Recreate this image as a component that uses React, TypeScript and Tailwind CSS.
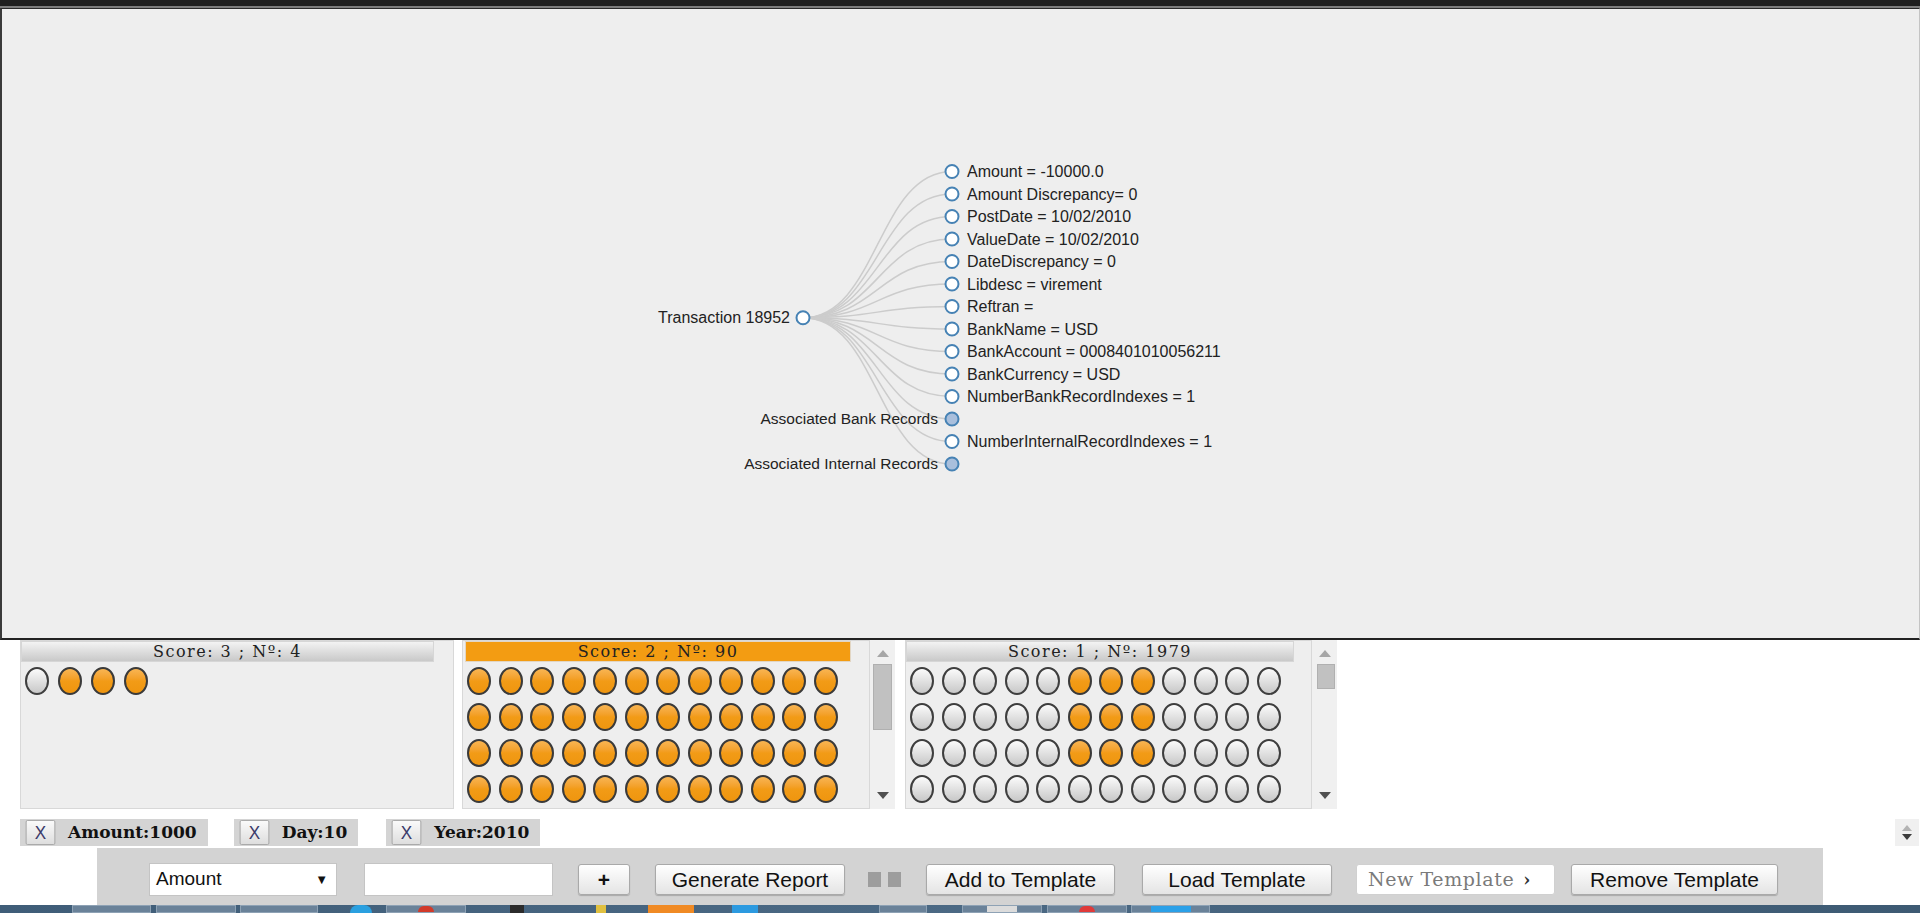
import React from "react";

type Leaf = { t: string; c?: boolean };

const CHILDREN: Leaf[] = [
  { t: "Amount = -10000.0" },
  { t: "Amount Discrepancy= 0" },
  { t: "PostDate = 10/02/2010" },
  { t: "ValueDate = 10/02/2010" },
  { t: "DateDiscrepancy = 0" },
  { t: "Libdesc = virement" },
  { t: "Reftran =" },
  { t: "BankName = USD" },
  { t: "BankAccount = 0008401010056211" },
  { t: "BankCurrency = USD" },
  { t: "NumberBankRecordIndexes = 1" },
  { t: "Associated Bank Records", c: true },
  { t: "NumberInternalRecordIndexes = 1" },
  { t: "Associated Internal Records", c: true },
];

const RX = 801;
const CX = 950;
const Y0 = 162.5;
const DY = 22.5;
const RY = Y0 + (DY * (CHILDREN.length - 1)) / 2;

const TreeCanvas = () => {
  const mx = (RX + CX) / 2;
  return (
    <svg width="1917" height="629" className="block">
      <g fill="none" stroke="#cccccc" strokeWidth="1.5">
        {CHILDREN.map((_, i) => {
          const y = Y0 + DY * i;
          return <path key={i} d={`M${RX},${RY}C${mx},${RY} ${mx},${y} ${CX},${y}`} />;
        })}
      </g>
      <g fontFamily="'Liberation Sans', Arial, sans-serif" fontSize="16" fill="#222">
        <circle cx={RX} cy={RY} r="6.5" fill="#fff" stroke="#4682b4" strokeWidth="2" />
        <text x={RX - 13} y={RY} dy="0.35em" textAnchor="end">
          Transaction 18952
        </text>
        {CHILDREN.map((n, i) => {
          const y = Y0 + DY * i;
          return (
            <g key={i}>
              <circle cx={CX} cy={y} r="6.5" fill={n.c ? "#a9bfdc" : "#fff"} stroke="#4682b4" strokeWidth="2" />
              <text
                x={n.c ? CX - 14 : CX + 15}
                y={y}
                dy="0.35em"
                textAnchor={n.c ? "end" : "start"}
                fontSize={n.c ? "15.5" : "16"}
              >
                {n.t}
              </text>
            </g>
          );
        })}
      </g>
    </svg>
  );
};

const Dot = ({ on }: { on: boolean }) =>
  on ? (
    <div className="w-[24px] h-[28px] shrink-0 rounded-[50%] border-2 border-[#3a3a3a] bg-linear-to-b from-[#f8b552] via-[#f29b16] to-[#ef950f]" />
  ) : (
    <div className="w-[24px] h-[28px] shrink-0 rounded-[50%] border-2 border-[#3e3e3e] bg-linear-to-b from-[#fbfbfb] to-[#c8c8c8]" />
  );

const Header = ({ text, orange, w }: { text: string; orange?: boolean; w: string }) => (
  <div
    className={
      (orange
        ? "bg-[#f39c12] border-[#e2d6c4] "
        : "bg-linear-to-b from-[#f3f3f3] to-[#c9c9c9] border-[#d6d6d6] ") +
      w +
      " h-[21px] border flex items-center justify-center font-['DejaVu_Serif',serif] text-[16px] tracking-[1.5px] text-[#222] leading-none"
    }
  >
    {text}
  </div>
);

const Scrollbar = ({ small }: { small?: boolean }) => (
  <div className="w-[25px] h-full bg-[#f0f0f0] flex flex-col items-center">
    <svg width="12" height="7" className="mt-[10px]">
      <path d="M0,7 L6,0 L12,7 Z" fill="#a6a6a6" />
    </svg>
    <div
      className={
        small
          ? "mt-[7px] w-[18px] h-[25px] bg-[#c1c1c1] border border-[#b0b0b0] ml-[2px]"
          : "mt-[7px] w-[19px] h-[66px] bg-[#c1c1c1] border border-[#b0b0b0]"
      }
    />
    <div className="flex-1" />
    <svg width="12" height="7" className="mb-[10px]">
      <path d="M0,0 L12,0 L6,7 Z" fill="#505050" />
    </svg>
  </div>
);

const panel2 = Array.from({ length: 90 }, () => true);
const panel3 = Array.from({ length: 72 }, (_, i) => {
  const row = Math.floor(i / 12);
  const col = i % 12;
  return row < 3 && col >= 5 && col <= 7;
});

const Chip = ({ label }: { label: string }) => (
  <div className="h-[27px] bg-[#d4d4d4] flex items-center pl-[4px] pr-[11px]">
    <div className="w-[33px] h-[25px] rounded-[2px] border border-[#a8a8a8] bg-linear-to-b from-[#fafafa] to-[#dedede] flex items-center justify-center font-['Liberation_Sans',sans-serif] text-[19px] font-light text-[#3a3a6a] leading-none scale-x-90">
      X
    </div>
    <span className="ml-[11px] font-['DejaVu_Serif',serif] font-bold text-[17px] text-[#111] leading-none">{label}</span>
  </div>
);

const Btn = ({ children, w, cls = "" }: { children: React.ReactNode; w: string; cls?: string }) => (
  <div
    className={
      w +
      " " +
      cls +
      " h-[31px] rounded-[3px] border border-[#a9a9a9] bg-linear-to-b from-white to-[#e4e4e4] shadow-[0_1px_1px_rgba(0,0,0,0.2)] flex items-center justify-center text-[21px] text-[#111] leading-none shrink-0"
    }
  >
    {children}
  </div>
);

const TASK = ["ml-[72px] w-[79px]", "ml-[5px] w-[80px]", "ml-[4px] w-[78px]"];

export default function App() {
  return (
    <div className="w-full h-[913px] overflow-hidden bg-white flex flex-col font-['Liberation_Sans',Arial,sans-serif]">
      <div className="h-[6px] bg-[#1f1f1f] shrink-0" />
      <div className="h-[2px] bg-[#7c7c7c] shrink-0" />
      <div className="h-[632px] shrink-0 bg-[#eeeeee] border-t border-l-2 border-r border-b-2 border-t-[#2a2a2a] border-l-[#3a3a3a] border-r-[#c4c4c4] border-b-[#222222] overflow-hidden">
        <TreeCanvas />
      </div>

      <div className="h-[169px] shrink-0 flex items-start pl-[20px]">
        <div className="w-[434px] h-[169px] border border-[#d8d8d8] bg-[#eeeeee]">
          <Header text="Score: 3 ; Nº: 4" w="w-[413px]" />
          <div className="flex gap-[9px] pl-[4px] pt-[5px]">
            <Dot on={false} />
            <Dot on />
            <Dot on />
            <Dot on />
          </div>
        </div>

        <div className="ml-[8px] w-[433px] h-[169px] flex">
          <div className="w-[408px] h-full border border-[#d8d8d8] bg-[#eeeeee] overflow-hidden">
            <div className="ml-[2px]">
              <Header text="Score: 2 ; Nº: 90" orange w="w-[386px]" />
            </div>
            <div className="grid grid-cols-[repeat(12,24px)] gap-x-[7.5px] gap-y-[8px] pl-[4px] pt-[5px]">
              {panel2.map((on, i) => (
                <Dot key={i} on={on} />
              ))}
            </div>
          </div>
          <Scrollbar />
        </div>

        <div className="ml-[10px] w-[433px] h-[169px] flex">
          <div className="w-[407px] h-full border border-[#d8d8d8] bg-[#eeeeee] overflow-hidden">
            <Header text="Score: 1 ; Nº: 1979" w="w-[388px]" />
            <div className="grid grid-cols-[repeat(12,24px)] gap-x-[7.5px] gap-y-[8px] pl-[4px] pt-[5px]">
              {panel3.map((on, i) => (
                <Dot key={i} on={on} />
              ))}
            </div>
          </div>
          <Scrollbar small />
        </div>
      </div>

      <div className="mt-[10px] h-[27px] shrink-0 flex items-center justify-between pl-[20px] pr-[1px]">
        <div className="flex items-center">
          <Chip label="Amount:1000" />
          <div className="ml-[26px]">
            <Chip label="Day:10" />
          </div>
          <div className="ml-[28px]">
            <Chip label="Year:2010" />
          </div>
        </div>
        <div className="w-[24px] h-[27px] bg-[#f0f0f0] flex flex-col items-center justify-center gap-[3px]">
          <svg width="10" height="6">
            <path d="M0,6 L5,0 L10,6 Z" fill="#b3b3b3" />
          </svg>
          <svg width="10" height="6">
            <path d="M0,0 L10,0 L5,6 Z" fill="#3c3c3c" />
          </svg>
        </div>
      </div>

      <div className="mt-[2px] ml-[97px] w-[1726px] h-[57px] shrink-0 bg-[#d3d3d3] flex items-start pt-[15px] pl-[52px]">
        <div className="flex items-center h-[33px]">
          <div className="w-[188px] h-[33px] bg-white border border-[#c4c4c4] flex items-center justify-between pl-[6px] pr-[8px] text-[19px] text-[#111] shrink-0">
            <span>Amount</span>
            <span className="text-[13px] text-[#111]">▼</span>
          </div>
          <div className="ml-[27px] w-[189px] h-[33px] bg-white border border-[#c4c4c4] shrink-0" />
          <Btn w="w-[52px]" cls="ml-[25px] font-bold text-[16px]">
            +
          </Btn>
          <Btn w="w-[190px]" cls="ml-[25px]">
            Generate Report
          </Btn>
          <div className="ml-[23px] w-[34px] flex gap-[7px] shrink-0">
            <div className="w-[13px] h-[15px] bg-[#9d9d9d]" />
            <div className="w-[13px] h-[15px] bg-[#9d9d9d]" />
          </div>
          <Btn w="w-[189px]" cls="ml-[24px]">
            Add to Template
          </Btn>
          <Btn w="w-[190px]" cls="ml-[27px]">
            Load Template
          </Btn>
          <div className="ml-[24px] w-[199px] h-[31px] bg-white border border-[#d0d0d0] rounded-[3px] flex items-center pl-[11px] font-['DejaVu_Serif',serif] text-[19px] text-[#7a7a7a] tracking-[0.6px] leading-none shrink-0">
            New Template
            <span className="ml-[9px] text-[#333] font-bold text-[18px]">›</span>
          </div>
          <Btn w="w-[207px]" cls="ml-[16px]">
            Remove Template
          </Btn>
        </div>
      </div>

      <div className="h-[8px] shrink-0 bg-linear-to-r from-[#3f5d78] via-[#4b6984] to-[#3d5a73] flex items-stretch">
        {TASK.map((c, i) => (
          <div key={i} className={c + " border border-[#8ea2b5] bg-[#6a8299]"} />
        ))}
        <div className="ml-[32px] w-[22px] rounded-t-full bg-[#2aa0e0]" />
        <div className="ml-[14px] w-[80px] border border-[#8ea2b5] bg-[#6a8299] flex justify-center">
          <div className="w-[16px] rounded-t-full bg-[#d23a2a]" />
        </div>
        <div className="ml-[44px] w-[14px] bg-[#2b2b2b]" />
        <div className="ml-[72px] w-[10px] bg-[#e0c040]" />
        <div className="ml-[42px] w-[46px] bg-[#f08a24]" />
        <div className="ml-[38px] w-[26px] bg-[#2c9ae0]" />
        <div className="ml-[121px] w-[48px] border border-[#8ea2b5] bg-[#6a8299]" />
        <div className="ml-[35px] w-[80px] border border-[#8ea2b5] bg-[#6a8299] flex justify-center">
          <div className="w-[30px] bg-[#dcdcdc]" />
        </div>
        <div className="ml-[5px] w-[80px] border border-[#8ea2b5] bg-[#6a8299] flex justify-center">
          <div className="w-[16px] rounded-t-full bg-[#e03a3a]" />
        </div>
        <div className="ml-[4px] w-[79px] border border-[#8ea2b5] bg-[#6a8299] flex justify-center">
          <div className="w-[40px] bg-[#2aa0e8]" />
        </div>
      </div>
    </div>
  );
}
